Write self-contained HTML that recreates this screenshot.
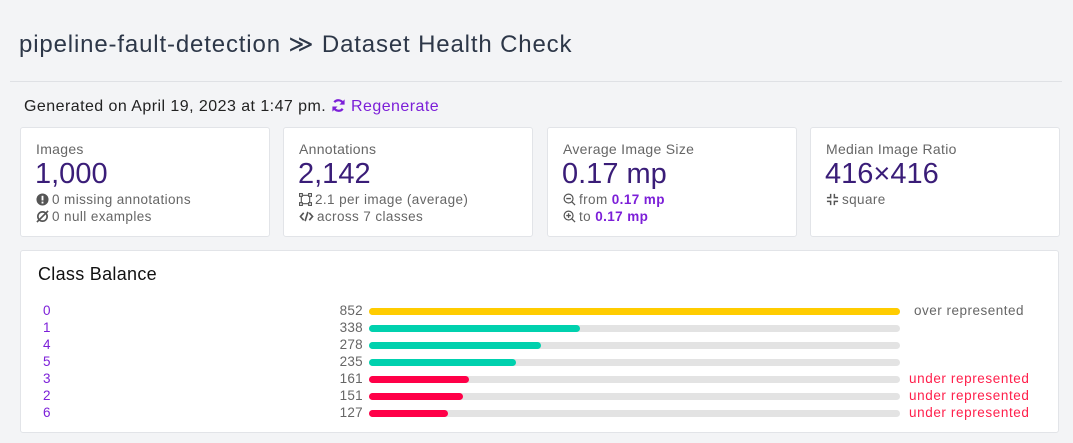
<!DOCTYPE html>
<html><head><meta charset="utf-8"><style>
body{margin:0;background:#f3f4f6;font-family:"Liberation Sans",sans-serif;width:1073px;height:443px;overflow:hidden;position:relative}
.a{position:absolute}
h1{position:absolute;left:19px;top:30px;margin:0;font-size:24px;font-weight:normal;color:#2d3748;letter-spacing:0.85px;white-space:nowrap}
.hr{position:absolute;left:10px;top:81px;width:1052px;height:1px;background:#dfe1e5}
.gen{position:absolute;left:24px;top:98px;font-size:16px;color:#222;letter-spacing:0.45px;white-space:nowrap}
.gen span{color:#7c1fd8}
.gen svg{vertical-align:-2px}
.card{position:absolute;top:127px;height:108px;width:248px;background:#fff;border:1px solid #e2e4e8;border-radius:3px}
.lab{position:absolute;left:15px;top:13px;font-size:14px;color:#666;letter-spacing:0.3px}
.big{position:absolute;left:14px;top:30px;font-size:29px;color:#3a1d78}
.sub{position:absolute;left:15px;font-size:13.5px;color:#666;white-space:nowrap;letter-spacing:0.4px}
.sub b{color:#7c1fd8}
.sub svg{vertical-align:-2px;margin-right:3px}
.cb{position:absolute;left:20px;top:250px;width:1037px;height:181px;background:#fff;border:1px solid #e2e4e8;border-radius:3px}
.row{position:absolute;left:0;height:17px;width:1037px;font-size:13.5px;letter-spacing:0.3px}
.row .l{position:absolute;left:22px;top:0;color:#7c1fd8}
.row .n{position:absolute;right:695px;top:0;color:#666}
.row .t{position:absolute;left:348px;top:5px;width:531px;height:7px;background:#e3e3e3;border-radius:4px}
.row .f{position:absolute;left:0;top:0;height:7px;border-radius:4px}
.row .r{position:absolute;left:888px;top:0;color:#ff1f4b;letter-spacing:0.6px}
</style></head><body>
<h1>pipeline-fault-detection &#8811; Dataset Health Check</h1>
<div class="hr"></div>
<div class="gen">Generated on April 19, 2023 at 1:47 pm. <span><svg width="15" height="15" viewBox="0 0 16 16"><path d="M13 6A5.5 5.5 0 0 0 3.5 4.5M3 10a5.5 5.5 0 0 0 9.5 1.5" fill="none" stroke="#7c1fd8" stroke-width="2.4"/><path d="M14.5 1.5V7H9z M1.5 14.5V9H7z" fill="#7c1fd8"/></svg> Regenerate</span></div>

<div class="card" style="left:20px"><div class="lab">Images</div><div class="big">1,000</div>
<div class="sub" style="top:64px"><svg width="13" height="13" viewBox="0 0 14 14"><circle cx="7" cy="7" r="6.5" fill="#555"/><rect x="6" y="3" width="2" height="5" fill="#fff"/><rect x="6" y="9.3" width="2" height="2" fill="#fff"/></svg>0 missing annotations</div>
<div class="sub" style="top:81px"><svg width="13" height="13" viewBox="0 0 14 14"><circle cx="7" cy="7" r="5" fill="none" stroke="#555" stroke-width="1.8"/><path d="M1 13L13 1" stroke="#555" stroke-width="1.8"/></svg>0 null examples</div></div>
<div class="card" style="left:283px"><div class="lab">Annotations</div><div class="big">2,142</div>
<div class="sub" style="top:64px"><svg width="13" height="13" viewBox="0 0 14 14"><rect x="2.5" y="2.5" width="9" height="9" fill="none" stroke="#555" stroke-width="1.2"/><g fill="#fff" stroke="#555" stroke-width="1.2"><rect x="0.6" y="0.6" width="3" height="3"/><rect x="10.4" y="0.6" width="3" height="3"/><rect x="0.6" y="10.4" width="3" height="3"/><rect x="10.4" y="10.4" width="3" height="3"/></g></svg>2.1 per image (average)</div>
<div class="sub" style="top:81px"><svg width="15" height="13" viewBox="0 0 16 14"><path d="M5 3L1.5 7 5 11M11 3l3.5 4L11 11M9.5 2L6.5 12" fill="none" stroke="#555" stroke-width="1.8"/></svg>across 7 classes</div></div>
<div class="card" style="left:547px"><div class="lab">Average Image Size</div><div class="big">0.17 mp</div>
<div class="sub" style="top:64px"><svg width="13" height="13" viewBox="0 0 14 14"><circle cx="6" cy="6" r="4.8" fill="none" stroke="#555" stroke-width="1.3"/><path d="M9.5 9.5L13 13M3.5 6h5" stroke="#555" stroke-width="1.4"/></svg>from <b>0.17 mp</b></div>
<div class="sub" style="top:81px"><svg width="13" height="13" viewBox="0 0 14 14"><circle cx="6" cy="6" r="4.8" fill="none" stroke="#555" stroke-width="1.3"/><path d="M9.5 9.5L13 13M3.5 6h5M6 3.5v5" stroke="#555" stroke-width="1.4"/></svg>to <b>0.17 mp</b></div></div>
<div class="card" style="left:810px"><div class="lab">Median Image Ratio</div><div class="big">416×416</div>
<div class="sub" style="top:64px"><svg width="13" height="13" viewBox="0 0 14 14"><path d="M5 1v4H1M9 1v4h4M5 13V9H1M9 13V9h4" fill="none" stroke="#555" stroke-width="1.6"/></svg>square</div></div>

<div class="cb">
<div class="a" style="left:17px;top:13px;font-size:18px;color:#111;letter-spacing:0.3px">Class Balance</div>
<div class="row" style="top:52px"><span class="l">0</span><span class="n">852</span><div class="t"><div class="f" style="width:531px;background:#ffcc00"></div></div><span class="r" style="left:893px;color:#666;letter-spacing:0.5px">over represented</span></div>
<div class="row" style="top:69px"><span class="l">1</span><span class="n">338</span><div class="t"><div class="f" style="width:211px;background:#00d1ae"></div></div></div>
<div class="row" style="top:86px"><span class="l">4</span><span class="n">278</span><div class="t"><div class="f" style="width:172px;background:#00d1ae"></div></div></div>
<div class="row" style="top:103px"><span class="l">5</span><span class="n">235</span><div class="t"><div class="f" style="width:147px;background:#00d1ae"></div></div></div>
<div class="row" style="top:120px"><span class="l">3</span><span class="n">161</span><div class="t"><div class="f" style="width:100px;background:#ff0048"></div></div><span class="r">under represented</span></div>
<div class="row" style="top:137px"><span class="l">2</span><span class="n">151</span><div class="t"><div class="f" style="width:94px;background:#ff0048"></div></div><span class="r">under represented</span></div>
<div class="row" style="top:154px"><span class="l">6</span><span class="n">127</span><div class="t"><div class="f" style="width:79px;background:#ff0048"></div></div><span class="r">under represented</span></div>
</div>
</body></html>
